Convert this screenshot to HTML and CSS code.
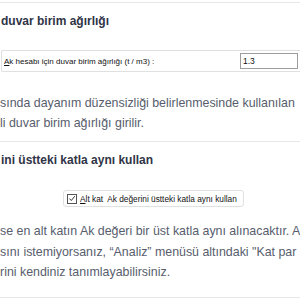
FILE: index.html
```html
<!DOCTYPE html>
<html lang="tr">
  <head>
    <meta charset="UTF-8" />
    <meta name="viewport" content="width=device-width, initial-scale=1.0" />
    <title>Duvar birim ağırlığı</title>
    <link rel="stylesheet" href="styles.css">
  </head>
  <body>
    <div class="page">
      <hr class="rule" />
      <h2 class="title">duvar birim ağırlığı</h2>

      <div class="shot shot-input">
        <label class="shot-label" for="wallWeight"><u>A</u>k hesabı için duvar birim ağırlığı (t / m3) :</label>
        <input class="shot-field" id="wallWeight" type="text" value="1.3" />
      </div>

      <p class="text text-first">
        sında dayanım düzensizliği belirlenmesinde kullanılan<br />
        li duvar birim ağırlığı girilir.
      </p>

      <hr class="rule" />
      <h2 class="title">ini üstteki katla aynı kullan</h2>

      <div class="shot shot-check">
        <span class="check-box">
          <svg width="9" height="9" viewBox="0 0 9 9">
            <path d="M1.6 4.6 L3.7 6.8 L7.6 1.9" fill="none" stroke="#333" stroke-width="1.1" />
          </svg>
        </span>
        <span class="shot-label"><u>A</u>lt kat&nbsp; Ak değerini üstteki katla aynı kullan</span>
      </div>

      <p class="text text-second">
        se en alt katın Ak değeri bir üst katla aynı alınacaktır. A<br />
        sını istemiyorsanız, “Analiz” menüsü altındaki "Kat par<br />
        rini kendiniz tanımlayabilirsiniz.
      </p>

      <hr class="rule rule-last" />
    </div>
  </body>
</html>
```

FILE: styles.css
```css
body {
  margin: 0;
  background-color: white;
  font-family: "Liberation Sans", Arial, sans-serif;
  overflow: hidden;
}
.page {
  width: 300px;
  height: 300px;
  padding-top: 2px;
  box-sizing: border-box;
  overflow: hidden;
  white-space: nowrap;
}
.rule {
  margin: 0;
  border: none;
  height: 1px;
  background-color: #e6e7ea;
}
.title {
  margin: 8px 0 0 1px;
  font-size: 12px;
  line-height: 20px;
  font-weight: bold;
  color: #2f3446;
}
.text {
  margin: 0;
  font-size: 12.4px;
  line-height: 20px;
  color: #575d6d;
}
.text-first {
  margin-top: 21px;
  margin-bottom: 8px;
}
.text-second {
  margin-top: 14px;
  margin-bottom: 14px;
  line-height: 20.5px;
}
.shot {
  display: flex;
  align-items: center;
  background-color: white;
  border: 1px solid #dfe0e2;
  color: #111;
}
.shot-input {
  margin: 19px 0 0 1px;
  height: 20px;
  border-right: none;
  border-radius: 2px 0 0 2px;
  justify-content: space-between;
  padding-left: 2px;
  font-size: 8px;
}
.shot-field {
  width: 58px;
  height: 16px;
  box-sizing: border-box;
  margin: 0 2px 0 0;
  padding: 0 2px;
  border: 1px solid #9d9d9d;
  font-family: "Liberation Sans", Arial, sans-serif;
  font-size: 8.5px;
  color: #111;
  outline: none;
}
.shot-check {
  margin: 20px 0 0 63px;
  width: 176px;
  height: 15px;
  border-radius: 3px;
  padding-left: 3px;
  gap: 3px;
  font-size: 8.3px;
}
.check-box {
  display: flex;
  align-items: center;
  justify-content: center;
  width: 10px;
  height: 10px;
  box-sizing: border-box;
  border: 1px solid #555;
}
.check-box svg {
  display: block;
}
```
